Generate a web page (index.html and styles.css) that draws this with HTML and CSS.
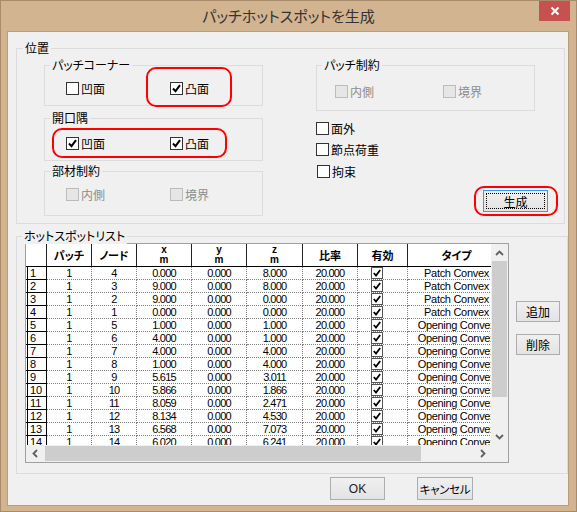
FILE: index.html
```html
<!DOCTYPE html>
<html lang="ja">
<head>
<meta charset="utf-8">
<title>パッチホットスポットを生成</title>
<link rel="stylesheet" href="styles.css">
</head>
<body>
<div class="window">
  <div class="titlebar">
    <div class="title">パッチホットスポットを生成</div>
    <div class="close"><svg width="10" height="10" viewBox="0 0 10 10"><path d="M1.5 1.5 L8.5 8.5 M8.5 1.5 L1.5 8.5" stroke="#fff" stroke-width="2"/></svg></div>
  </div>
  <div class="client">
    <div class="group g-pos">
      <span class="legend legend-pos">位置</span>
      <div class="pos-left">
        <div class="group g-corner">
          <span class="legend">パッチコーナー</span>
          <div class="cb-row">
            <div class="cb w104"><span class="box"></span>凹面</div>
            <div class="cb"><span class="box"><svg width="9" height="9" viewBox="0 0 9 9"><path d="M1 4.5 L3.5 7.2 L8 1.2" fill="none" stroke="#000" stroke-width="2"/></svg></span>凸面</div>
          </div>
          <div class="hl hl-corner"></div>
        </div>
        <div class="group g-open">
          <span class="legend">開口隅</span>
          <div class="cb-row">
            <div class="cb w104"><span class="box"><svg width="9" height="9" viewBox="0 0 9 9"><path d="M1 4.5 L3.5 7.2 L8 1.2" fill="none" stroke="#000" stroke-width="2"/></svg></span>凹面</div>
            <div class="cb"><span class="box"><svg width="9" height="9" viewBox="0 0 9 9"><path d="M1 4.5 L3.5 7.2 L8 1.2" fill="none" stroke="#000" stroke-width="2"/></svg></span>凸面</div>
          </div>
          <div class="hl hl-open"></div>
        </div>
        <div class="group g-member">
          <span class="legend">部材制約</span>
          <div class="cb-row">
            <div class="cb dis w104"><span class="box"></span>内側</div>
            <div class="cb dis"><span class="box"></span>境界</div>
          </div>
        </div>
      </div>
      <div class="pos-right">
        <div class="group g-patch">
          <span class="legend">パッチ制約</span>
          <div class="cb-row">
            <div class="cb dis w108"><span class="box"></span>内側</div>
            <div class="cb dis"><span class="box"></span>境界</div>
          </div>
        </div>
        <div class="cb-list">
          <div class="cb"><span class="box"></span>面外</div>
          <div class="cb"><span class="box"></span>節点荷重</div>
          <div class="cb shift1"><span class="box"></span>拘束</div>
        </div>
        <div class="gen-wrap">
          <div class="btn btn-gen">生成</div>
          <div class="hl hl-gen"></div>
        </div>
      </div>
    </div>

    <div class="group g-list">
      <span class="legend">ホットスポットリスト</span>
      <div class="gridbox">
        <div class="viewport">
          <table class="data">
            <colgroup>
              <col class="c-rh"><col class="c45"><col class="c45"><col class="c55"><col class="c55"><col class="c56"><col class="c55"><col class="c50"><col class="c98">
            </colgroup>
            <thead>
              <tr>
                <th class="h-rh"></th>
                <th>パッチ</th>
                <th>ノード</th>
                <th class="latin">x<br>m</th>
                <th class="latin">y<br>m</th>
                <th class="latin">z<br>m</th>
                <th>比率</th>
                <th>有効</th>
                <th>タイプ</th>
              </tr>
            </thead>
            <tbody>
              <tr><td class="rh"><div>1</div></td><td>1</td><td>4</td><td>0.000</td><td>0.000</td><td>8.000</td><td>20.000</td><td class="chk"><span class="tcb"><svg width="8" height="8" viewBox="0 0 8 8"><path d="M0.8 4 L3 6.5 L7.2 1" fill="none" stroke="#000" stroke-width="1.8"/></svg></span></td><td class="type">Patch Convex</td></tr>
              <tr><td class="rh"><div>2</div></td><td>1</td><td>3</td><td>9.000</td><td>0.000</td><td>8.000</td><td>20.000</td><td class="chk"><span class="tcb"><svg width="8" height="8" viewBox="0 0 8 8"><path d="M0.8 4 L3 6.5 L7.2 1" fill="none" stroke="#000" stroke-width="1.8"/></svg></span></td><td class="type">Patch Convex</td></tr>
              <tr><td class="rh"><div>3</div></td><td>1</td><td>2</td><td>9.000</td><td>0.000</td><td>0.000</td><td>20.000</td><td class="chk"><span class="tcb"><svg width="8" height="8" viewBox="0 0 8 8"><path d="M0.8 4 L3 6.5 L7.2 1" fill="none" stroke="#000" stroke-width="1.8"/></svg></span></td><td class="type">Patch Convex</td></tr>
              <tr><td class="rh"><div>4</div></td><td>1</td><td>1</td><td>0.000</td><td>0.000</td><td>0.000</td><td>20.000</td><td class="chk"><span class="tcb"><svg width="8" height="8" viewBox="0 0 8 8"><path d="M0.8 4 L3 6.5 L7.2 1" fill="none" stroke="#000" stroke-width="1.8"/></svg></span></td><td class="type">Patch Convex</td></tr>
              <tr><td class="rh"><div>5</div></td><td>1</td><td>5</td><td>1.000</td><td>0.000</td><td>1.000</td><td>20.000</td><td class="chk"><span class="tcb"><svg width="8" height="8" viewBox="0 0 8 8"><path d="M0.8 4 L3 6.5 L7.2 1" fill="none" stroke="#000" stroke-width="1.8"/></svg></span></td><td class="type">Opening Convex</td></tr>
              <tr><td class="rh"><div>6</div></td><td>1</td><td>6</td><td>4.000</td><td>0.000</td><td>1.000</td><td>20.000</td><td class="chk"><span class="tcb"><svg width="8" height="8" viewBox="0 0 8 8"><path d="M0.8 4 L3 6.5 L7.2 1" fill="none" stroke="#000" stroke-width="1.8"/></svg></span></td><td class="type">Opening Convex</td></tr>
              <tr><td class="rh"><div>7</div></td><td>1</td><td>7</td><td>4.000</td><td>0.000</td><td>4.000</td><td>20.000</td><td class="chk"><span class="tcb"><svg width="8" height="8" viewBox="0 0 8 8"><path d="M0.8 4 L3 6.5 L7.2 1" fill="none" stroke="#000" stroke-width="1.8"/></svg></span></td><td class="type">Opening Convex</td></tr>
              <tr><td class="rh"><div>8</div></td><td>1</td><td>8</td><td>1.000</td><td>0.000</td><td>4.000</td><td>20.000</td><td class="chk"><span class="tcb"><svg width="8" height="8" viewBox="0 0 8 8"><path d="M0.8 4 L3 6.5 L7.2 1" fill="none" stroke="#000" stroke-width="1.8"/></svg></span></td><td class="type">Opening Convex</td></tr>
              <tr><td class="rh"><div>9</div></td><td>1</td><td>9</td><td>5.615</td><td>0.000</td><td>3.011</td><td>20.000</td><td class="chk"><span class="tcb"><svg width="8" height="8" viewBox="0 0 8 8"><path d="M0.8 4 L3 6.5 L7.2 1" fill="none" stroke="#000" stroke-width="1.8"/></svg></span></td><td class="type">Opening Convex</td></tr>
              <tr><td class="rh"><div>10</div></td><td>1</td><td>10</td><td>5.866</td><td>0.000</td><td>1.866</td><td>20.000</td><td class="chk"><span class="tcb"><svg width="8" height="8" viewBox="0 0 8 8"><path d="M0.8 4 L3 6.5 L7.2 1" fill="none" stroke="#000" stroke-width="1.8"/></svg></span></td><td class="type">Opening Convex</td></tr>
              <tr><td class="rh"><div>11</div></td><td>1</td><td>11</td><td>8.059</td><td>0.000</td><td>2.471</td><td>20.000</td><td class="chk"><span class="tcb"><svg width="8" height="8" viewBox="0 0 8 8"><path d="M0.8 4 L3 6.5 L7.2 1" fill="none" stroke="#000" stroke-width="1.8"/></svg></span></td><td class="type">Opening Convex</td></tr>
              <tr><td class="rh"><div>12</div></td><td>1</td><td>12</td><td>8.134</td><td>0.000</td><td>4.530</td><td>20.000</td><td class="chk"><span class="tcb"><svg width="8" height="8" viewBox="0 0 8 8"><path d="M0.8 4 L3 6.5 L7.2 1" fill="none" stroke="#000" stroke-width="1.8"/></svg></span></td><td class="type">Opening Convex</td></tr>
              <tr><td class="rh"><div>13</div></td><td>1</td><td>13</td><td>6.568</td><td>0.000</td><td>7.073</td><td>20.000</td><td class="chk"><span class="tcb"><svg width="8" height="8" viewBox="0 0 8 8"><path d="M0.8 4 L3 6.5 L7.2 1" fill="none" stroke="#000" stroke-width="1.8"/></svg></span></td><td class="type">Opening Convex</td></tr>
              <tr><td class="rh"><div>14</div></td><td>1</td><td>14</td><td>6.020</td><td>0.000</td><td>6.241</td><td>20.000</td><td class="chk"><span class="tcb"><svg width="8" height="8" viewBox="0 0 8 8"><path d="M0.8 4 L3 6.5 L7.2 1" fill="none" stroke="#000" stroke-width="1.8"/></svg></span></td><td class="type">Opening Convex</td></tr>
            </tbody>
          </table>
        </div>
        <div class="vscroll">
          <div class="arrow"><svg width="9" height="6" viewBox="0 0 9 6"><path d="M1 5 L4.5 1.5 L8 5" fill="none" stroke="#606060" stroke-width="1.8"/></svg></div>
          <div class="vthumb"></div>
          <div class="vspace"></div>
          <div class="arrow"><svg width="9" height="6" viewBox="0 0 9 6"><path d="M1 1 L4.5 4.5 L8 1" fill="none" stroke="#606060" stroke-width="1.8"/></svg></div>
        </div>
        <div class="hscroll">
          <div class="arrow"><svg width="6" height="9" viewBox="0 0 6 9"><path d="M5 1 L1.5 4.5 L5 8" fill="none" stroke="#606060" stroke-width="1.8"/></svg></div>
          <div class="hthumb"></div>
          <div class="hspace"></div>
          <div class="arrow"><svg width="6" height="9" viewBox="0 0 6 9"><path d="M1 1 L4.5 4.5 L1 8" fill="none" stroke="#606060" stroke-width="1.8"/></svg></div>
        </div>
        <div class="corner"></div>
      </div>
      <div class="side-btns">
        <div class="btn btn-side">追加</div>
        <div class="btn btn-side btn-del">削除</div>
      </div>
    </div>

    <div class="footer">
      <div class="btn btn-ok">OK</div>
      <div class="btn btn-cancel">キャンセル</div>
    </div>
  </div>
</div>
</body>
</html>
```
FILE: styles.css
```css
* { box-sizing: border-box; }
body { margin: 0; background: #ffffff; font-family: "Noto Sans CJK JP", sans-serif; color: #000; }

.window {
  width: 577px; height: 512px;
  background: #d3b491;
  border: 1px solid #a88b6a;
  position: relative;
}
.titlebar { height: 30px; position: relative; }
.title {
  text-align: center; font-size: 15px; line-height: 30px; color: #333;
  font-feature-settings: "palt";
}
.close {
  position: absolute; top: 0; right: 6px; width: 31px; height: 20px;
  background: #c75050; display: flex; align-items: center; justify-content: center;
}

.client {
  margin-left: 6px; width: 562px; height: 475px;
  background: #f0f0f0; border: 1px solid #b99e7e;
  padding: 16px 0 0 8px;
}

.group { border: 1px solid #dcdcdc; position: relative; }
.legend {
  position: absolute; top: -9px; left: 5px; padding: 0 2px;
  background: #f0f0f0; font-size: 12px; line-height: 16px; white-space: nowrap;
  font-feature-settings: "palt";
}
.legend-pos { left: 6px; }

.g-pos { width: 549px; height: 176px; display: flex; padding: 16px 0 0 27px; }
.pos-left { width: 219px; display: flex; flex-direction: column; flex: none; }
.g-corner { height: 41px; padding: 16px 0 0 21px; }
.g-open { height: 43px; margin-top: 12px; padding: 18px 0 0 21px; }
.g-member { height: 45px; margin-top: 10px; padding: 16px 0 0 21px; }
.pos-right { width: 219px; margin-left: 53px; flex: none; }
.g-patch { height: 46px; padding: 19px 0 0 18px; }

.cb-row { display: flex; }
.w104 { width: 104px; }
.w108 { width: 108px; }
.cb { display: flex; align-items: center; height: 13px; font-size: 12px; line-height: 13px; white-space: nowrap; }
.box {
  width: 13px; height: 13px; border: 1px solid #333; background: #fff;
  margin-right: 2px; flex: none; display: flex; align-items: center; justify-content: center;
}
.cb.dis { color: #8d8d8d; }
.cb.dis .box { background: #e6e6e6; border-color: #bcbcbc; }

.cb-list { margin-top: 11px; }
.cb-list .cb + .cb { margin-top: 8px; }
.cb-list .cb.shift1 { margin-top: 9px; margin-left: 1px; }

.hl { position: absolute; border: 2px solid #ff0000; border-radius: 10px; pointer-events: none; }
.hl-corner { left: 101px; top: 1px; width: 86px; height: 40px; }
.hl-open { left: 7px; top: 9px; width: 175px; height: 30px; }
.gen-wrap { position: relative; margin: 12px 0 0 167px; width: 65px; height: 22px; }
.hl-gen { left: -9px; top: -4px; width: 84px; height: 30px; }

.btn {
  background: linear-gradient(#f0f0f0, #e3e3e3);
  border: 1px solid #adadad;
  font-size: 12px; display: flex; align-items: center; justify-content: center;
  position: relative; white-space: nowrap; padding: 0;
}
.btn-gen { width: 65px; height: 22px; border-color: #3399ff; }
.btn-gen::after {
  content: ""; position: absolute; left: 2px; top: 2px; right: 2px; bottom: 2px;
  border: 1px dotted #000;
}

.g-list { margin-top: 12px; width: 552px; height: 238px; display: flex; padding: 6px 0 0 8px; }
.gridbox {
  width: 484px; height: 220px; flex: none;
  border: 1px solid #a0a0a0; background: #fff;
  display: grid; grid-template-columns: 465px 17px; grid-template-rows: 201px 17px;
}
.viewport { overflow: hidden; }
.data {
  border-collapse: separate; border-spacing: 0; table-layout: fixed; width: 480px;
  font-family: "Liberation Sans", "Noto Sans CJK JP", sans-serif; font-size: 11px;
}
.c-rh { width: 21px; }
.c45 { width: 45px; }
.c50 { width: 50px; }
.c55 { width: 55px; }
.c56 { width: 56px; }
.c98 { width: 98px; }
.data th {
  height: 23px; padding: 0; border-right: 1px solid #222; border-bottom: 1px solid #000;
  font-family: "Noto Sans CJK JP", sans-serif; font-weight: 700; font-size: 11px; line-height: 12px;
  font-feature-settings: "palt"; text-align: center; vertical-align: middle; overflow: hidden;
}
.data th.latin { font-family: "Liberation Sans", sans-serif; font-size: 10px; line-height: 10px; }
.data th.h-rh { border-right: 1px solid #222; }
.data td {
  height: 13px; padding: 0; line-height: 12px; text-align: center; white-space: nowrap; overflow: hidden;
  border-right: 1px dotted #808080; border-bottom: 1px dotted #808080; letter-spacing: -0.8px;
}
.data td.rh { border-right: 1px solid #000; border-bottom: 1px solid #000; text-align: left; }
.data td.rh div { border-left: 1px solid #000; margin-left: 1px; height: 12px; padding-left: 2px; letter-spacing: 0; }
.data td.type { letter-spacing: -0.3px; }
.data td.chk { text-align: left; }
.tcb {
  display: flex; align-items: center; justify-content: center;
  width: 12px; height: 12px; border: 1px solid #555; margin-left: 13px; background: #fff;
}

.vscroll { background: #f0f0f0; display: flex; flex-direction: column; align-items: center; }
.vscroll .arrow { width: 17px; height: 17px; flex: none; display: flex; align-items: center; justify-content: center; }
.vthumb { width: 15px; height: 136px; background: #cdcdcd; flex: none; }
.vspace { flex: 1; }
.hscroll { background: #f0f0f0; display: flex; align-items: center; }
.hscroll .arrow { width: 17px; height: 17px; flex: none; display: flex; align-items: center; justify-content: center; }
.hthumb { width: 376px; height: 15px; margin-left: 2px; background: #cdcdcd; flex: none; }
.hspace { flex: 1; }
.corner { background: #f0f0f0; }

.side-btns { margin-left: 7px; padding-top: 58px; display: flex; flex-direction: column; }
.btn-side { width: 44px; height: 21px; }
.btn-del { margin-top: 12px; }

.footer { display: flex; margin-top: 3px; }
.btn-ok { width: 55px; height: 23px; margin-left: 314px; font-family: "Liberation Sans", sans-serif; color: #222; }
.btn-cancel { width: 56px; height: 23px; margin-left: 32px; font-size: 11.5px; letter-spacing: -0.3px; font-feature-settings: "palt"; }
```
